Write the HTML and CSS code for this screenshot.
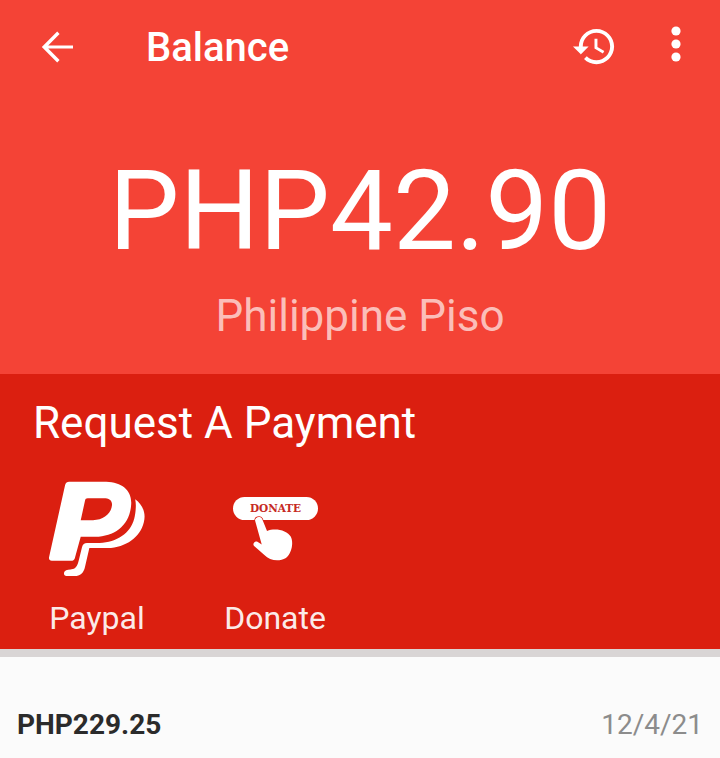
FILE: index.html
```html
<!DOCTYPE html>
<html lang="en">
<head>
<meta charset="utf-8">
<title>Balance</title>
<link rel="stylesheet" href="styles.css">
</head>
<body>
<main class="screen">
  <section class="hero">
    <header class="toolbar">
      <svg class="icon-back" viewBox="0 0 24 24" aria-hidden="true"><path d="M20 11.2H7.6l5.7-5.7L12.1 4.3 4.4 12l7.7 7.7 1.2-1.2-5.7-5.7H20v-1.6z"/></svg>
      <h1 class="title">Balance</h1>
      <svg class="icon-history" viewBox="0 0 24 24" aria-hidden="true"><path d="M13 3c-4.97 0-9 4.03-9 9H1l3.89 3.89.07.14L9 12H6c0-3.87 3.13-7 7-7s7 3.13 7 7-3.13 7-7 7c-1.93 0-3.68-.79-4.94-2.06l-1.42 1.42C8.27 19.99 10.51 21 13 21c4.97 0 9-4.03 9-9s-4.03-9-9-9zm-1 5v5l4.28 2.54.72-1.21-3.5-2.08V8H12z"/></svg>
      <svg class="icon-more" viewBox="0 0 12 48" aria-hidden="true"><circle cx="6" cy="9" r="4.6"/><circle cx="6" cy="22" r="4.6"/><circle cx="6" cy="35" r="4.6"/></svg>
    </header>
    <div class="amount">PHP42.90</div>
    <div class="currency">Philippine Piso</div>
  </section>
  <section class="request">
    <h2 class="request-title">Request A Payment</h2>
    <div class="methods">
      <div class="method">
        <svg class="logo-paypal" viewBox="80 30 300 295" aria-hidden="true">
          <path fill-rule="evenodd" d="M146 35H258C305 37 335 60 333 102C330 165 285 200 225 201H181L163 266C161 271 158 273 152 273H94C87 273 84 268 86 261L134 45C136 38 140 35 146 35ZM202 85C197 85 195 87 194 92L181 151H218C250 150 272 132 275 107C277 92 267 85 250 85Z"/>
          <path d="M345 88C368 105 378 130 371 157C360 202 318 233 262 235H207L194 291C190 310 180 319 162 319H138C131 319 128 311 133 305C137 300 148 300 157 298C168 295 172 285 175 272L185 232C187 224 192 220 200 220H238C290 217 330 192 342 147C346 130 349 106 345 88Z"/>
        </svg>
        <span class="method-label">Paypal</span>
      </div>
      <div class="method">
        <div class="logo-donate">
          <span class="donate-pill">DONATE</span>
          <svg class="donate-hand" viewBox="120 105 135 145" aria-hidden="true"><path d="M135 122C133 112 150 106 156 116L171 153C195 143 232 150 243 171C252 190 245 222 228 235C207 247 179 243 163 226L132 199C126 192 133 183 142 186L155 194Z"/></svg>
        </div>
        <span class="method-label">Donate</span>
      </div>
    </div>
  </section>
  <div class="divider"></div>
  <section class="row">
    <span class="row-amount">PHP229.25</span>
    <span class="row-date">12/4/21</span>
  </section>
</main>
</body>
</html>
```

FILE: styles.css
```css
* {
  box-sizing: border-box;
}

html,
body {
  margin: 0;
  padding: 0;
}

body {
  width: 720px;
  height: 758px;
  overflow: hidden;
  background: #fbfbfb;
  font-family: Roboto, "Liberation Sans", sans-serif;
}

.screen {
  display: flex;
  flex-direction: column;
}

.hero {
  flex: none;
  height: 374px;
  background: #f44336;
  color: #fff;
  display: flex;
  flex-direction: column;
  align-items: center;
}

.toolbar {
  width: 100%;
  height: 94px;
  display: flex;
  align-items: center;
  padding-left: 33px;
}

.toolbar svg {
  fill: #fff;
  flex: none;
}

.icon-back {
  width: 48px;
  height: 48px;
}

.title {
  margin: 2px 0 0 65px;
  flex: 1;
  font-size: 40px;
  line-height: 46px;
  font-weight: 500;
}

.icon-history {
  width: 47px;
  height: 47px;
  margin-right: 52px;
  margin-left: -2px;
  margin-top: -2px;
}

.icon-more {
  width: 12px;
  height: 48px;
  margin-right: 38px;
  margin-top: -2px;
}

.amount {
  margin-top: 51px;
  font-size: 112px;
  line-height: 132px;
  font-weight: 400;
}

.currency {
  margin-top: 17px;
  font-size: 44px;
  line-height: 44px;
  color: rgba(255, 255, 255, 0.66);
}

.request {
  flex: none;
  height: 275px;
  background: #db1f10;
  color: #fff;
  padding: 27px 0 0 33px;
}

.request-title {
  margin: 0;
  font-size: 44px;
  line-height: 44px;
  font-weight: 400;
}

.methods {
  display: flex;
  gap: 78px;
  margin-top: 35px;
  margin-left: 14px;
}

.method {
  width: 100px;
  display: flex;
  flex-direction: column;
  align-items: center;
}

.method-label {
  margin-top: 22px;
  font-size: 32px;
  line-height: 36px;
  color: rgba(255, 255, 255, 0.92);
}

.logo-paypal {
  width: 100px;
  height: 98px;
  fill: #fff;
}

.logo-donate {
  width: 100px;
  height: 98px;
  position: relative;
}

.donate-pill {
  position: absolute;
  left: 8px;
  top: 17px;
  width: 85px;
  height: 23px;
  border-radius: 12px;
  background: #fff;
  color: #c62a24;
  font-family: "DejaVu Serif", "Liberation Serif", serif;
  font-weight: 700;
  font-size: 10.5px;
  line-height: 23px;
  text-align: center;
}

.donate-hand {
  position: absolute;
  left: 25px;
  top: 35px;
  width: 45px;
  height: 48px;
  fill: #fff;
  stroke: #db1f10;
  stroke-width: 4px;
  paint-order: stroke;
  overflow: visible;
}

.divider {
  flex: none;
  height: 8px;
  background: #d9d5d5;
}

.row {
  flex: none;
  display: flex;
  justify-content: space-between;
  align-items: center;
  padding: 35px 17px 0;
  height: 101px;
}

.row-amount {
  font-size: 28px;
  line-height: 36px;
  font-weight: 700;
  color: #2b2b2b;
}

.row-date {
  font-size: 28px;
  line-height: 36px;
  color: #8c8c8c;
}
```
